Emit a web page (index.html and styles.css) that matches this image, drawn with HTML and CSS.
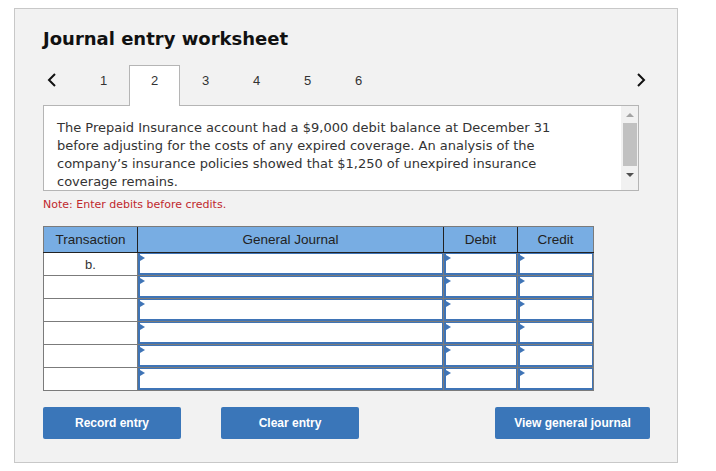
FILE: index.html
```html
<!DOCTYPE html>
<html lang="en">
<head>
    <meta charset="UTF-8">
    <title>Journal entry worksheet</title>
    <link rel="stylesheet" href="styles.css">
</head>
<body>

<div class="panel">
    <h1 class="title">Journal entry worksheet</h1>

    <div class="tabs">
        <span class="arrow prev">
            <svg width="10" height="14" viewBox="0 0 10 14"><path d="M8 1 L2 7 L8 13" fill="none" stroke="#111" stroke-width="2"/></svg>
        </span>
        <span class="tab">1</span>
        <span class="tab active">2</span>
        <span class="tab">3</span>
        <span class="tab">4</span>
        <span class="tab">5</span>
        <span class="tab">6</span>
        <span class="arrow next">
            <svg width="10" height="14" viewBox="0 0 10 14"><path d="M2 1 L8 7 L2 13" fill="none" stroke="#111" stroke-width="2"/></svg>
        </span>
    </div>

    <div class="question">
        <p class="question-text">The Prepaid Insurance account had a $9,000 debit balance at December 31 before adjusting for the costs of any expired coverage. An analysis of the company’s insurance policies showed that $1,250 of unexpired insurance coverage remains.</p>
        <div class="scrollbar">
            <span class="scroll-up"></span>
            <span class="thumb"></span>
            <span class="scroll-down"></span>
        </div>
    </div>

    <p class="note">Note: Enter debits before credits.</p>

    <table class="journal">
        <thead>
            <tr>
                <th class="col-trans">Transaction</th>
                <th class="col-journal">General Journal</th>
                <th class="col-debit">Debit</th>
                <th class="col-credit">Credit</th>
            </tr>
        </thead>
        <tbody>
            <tr>
                <td class="trans">b.</td>
                <td><div class="field"></div></td>
                <td><div class="field"></div></td>
                <td><div class="field"></div></td>
            </tr>
            <tr>
                <td class="trans"></td>
                <td><div class="field"></div></td>
                <td><div class="field"></div></td>
                <td><div class="field"></div></td>
            </tr>
            <tr>
                <td class="trans"></td>
                <td><div class="field"></div></td>
                <td><div class="field"></div></td>
                <td><div class="field"></div></td>
            </tr>
            <tr>
                <td class="trans"></td>
                <td><div class="field"></div></td>
                <td><div class="field"></div></td>
                <td><div class="field"></div></td>
            </tr>
            <tr>
                <td class="trans"></td>
                <td><div class="field"></div></td>
                <td><div class="field"></div></td>
                <td><div class="field"></div></td>
            </tr>
            <tr>
                <td class="trans"></td>
                <td><div class="field"></div></td>
                <td><div class="field"></div></td>
                <td><div class="field"></div></td>
            </tr>
        </tbody>
    </table>

    <div class="actions">
        <button class="btn">Record entry</button>
        <button class="btn">Clear entry</button>
        <button class="btn btn-right">View general journal</button>
    </div>
</div>

</body>
</html>
```

FILE: styles.css
```css
body {
    margin: 0;
    background-color: #fff;
    font-family: "DejaVu Sans", Verdana, sans-serif;
    color: #333;
}

.panel {
    margin: 8px 0 0 14px;
    width: 664px;
    height: 455px;
    box-sizing: border-box;
    border: 1px solid #c8c8c8;
    background-color: #f2f2f2;
    padding: 0 27px 0 28px;
}

.title {
    margin: 19px 0 0 0;
    font-size: 18px;
    line-height: 22px;
    font-weight: bold;
    color: #111;
}

/* tabs */
.tabs {
    display: flex;
    align-items: flex-start;
    height: 40px;
    margin-top: 15px;
    font-family: "Liberation Sans", Arial, sans-serif;
    font-size: 13px;
    color: #333;
}

.arrow {
    display: flex;
    height: 40px;
    align-items: flex-start;
    padding-top: 8px;
    box-sizing: border-box;
}

.prev {
    width: 35px;
    padding-left: 4px;
}

.next {
    margin-left: auto;
    margin-right: 4px;
}

.tab {
    width: 51px;
    height: 40px;
    box-sizing: border-box;
    padding-top: 7px;
    line-height: 18px;
    text-align: center;
}

.tab.active {
    position: relative;
    z-index: 2;
    height: 41px;
    background-color: #fff;
    border: 1px solid #b5b5b5;
    border-bottom: none;
    padding-top: 6px;
}

/* question text */
.question {
    display: flex;
    width: 596px;
    height: 86px;
    box-sizing: border-box;
    border: 1px solid #b5b5b5;
    background-color: #fff;
    overflow: hidden;
}

.question-text {
    flex: 1;
    margin: 0;
    padding: 13px 40px 0 13px;
    font-size: 13px;
    line-height: 18px;
    color: #333;
}

.scrollbar {
    width: 17px;
    display: flex;
    flex-direction: column;
    background-color: #f1f1f1;
}

.scroll-up, .scroll-down {
    height: 17px;
    display: flex;
    justify-content: center;
    align-items: center;
}

.scroll-up::before {
    content: "";
    border-left: 4px solid transparent;
    border-right: 4px solid transparent;
    border-bottom: 4px solid #a3a3a3;
}

.scroll-down::before {
    content: "";
    border-left: 4px solid transparent;
    border-right: 4px solid transparent;
    border-top: 4px solid #505050;
}

.thumb {
    height: 43px;
    margin: 0 1px 0 2px;
    background-color: #c1c1c1;
}

.note {
    margin: 6px 0 0 0;
    font-size: 11px;
    line-height: 16px;
    color: #c0282d;
}

/* journal table */
.journal {
    margin-top: 13px;
    width: 550px;
    border-collapse: collapse;
    table-layout: fixed;
    font-family: "Liberation Sans", Arial, sans-serif;
    font-size: 13.5px;
    border: 1px solid #7b7b7b;
}

.journal th {
    height: 25px;
    padding: 0;
    background-color: #78ade3;
    font-weight: normal;
    color: #222;
    border-left: 1px solid #222;
    border-bottom: 1px solid #222;
    border-top: 1px solid #7b7b7b;
}

.journal th:first-child {
    border-left: 1px solid #7b7b7b;
}

.col-trans { width: 93px; }
.col-journal { width: 305px; }
.col-debit { width: 73px; }
.col-credit { width: 75px; }

.journal td {
    height: 22px;
    padding: 0;
    background-color: #fff;
    border: 1px solid #7b7b7b;
    vertical-align: top;
}

.journal td.trans {
    text-align: center;
    vertical-align: middle;
    font-size: 13px;
    color: #333;
}

.field {
    position: relative;
    height: 19px;
    border: 1px solid #3f74b6;
    border-left-width: 2px;
    border-bottom-width: 2px;
}

/* little marker in the top left corner */
.field::before {
    content: "";
    position: absolute;
    top: 1px;
    left: 0;
    border-top: 3px solid transparent;
    border-bottom: 3px solid transparent;
    border-left: 5px solid #3f74b6;
}

/* buttons */
.actions {
    display: flex;
    margin-top: 16px;
}

.btn {
    width: 138px;
    height: 32px;
    margin-right: 40px;
    background-color: #3a76b9;
    color: #fff;
    border: none;
    border-radius: 2px;
    font-family: "Liberation Sans", Arial, sans-serif;
    font-size: 12px;
    font-weight: bold;
    cursor: pointer;
}

.btn-right {
    width: 155px;
    margin-left: auto;
    margin-right: 0;
}
```
